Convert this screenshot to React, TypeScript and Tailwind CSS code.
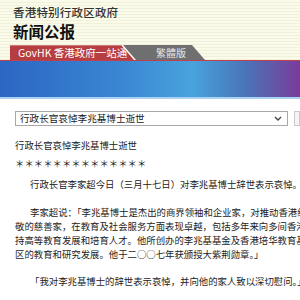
import React from "react";

const font = { fontFamily: '"Noto Sans CJK SC", "Noto Sans", sans-serif' };

export default function App() {
  return (
    <div className="w-[300px] h-[300px] overflow-hidden bg-white text-[#222]" style={font}>
      {/* header */}
      <div className="h-[60px] flex flex-col bg-[repeating-linear-gradient(180deg,#fbfbec_0px,#fbfbec_2px,#f1f1da_2px,#f1f1da_3px)]">
        <div className="pl-[13px] pt-[5px] text-[11.5px] leading-[14px] text-[#333] font-medium tracking-[0.2px] whitespace-nowrap">
          香港特别行政区政府
        </div>
        <div className="pl-[13px] mt-[3px] text-[15.5px] leading-[18px] font-bold text-[#111] whitespace-nowrap">
          新闻公报
        </div>
        <div className="mt-auto flex items-end pl-[10px] h-[15px]">
          <div className="relative z-10 h-[15px] w-[126px] bg-white [clip-path:polygon(0_0,113px_0,126px_100%,0_100%)]">
            <div className="h-[15px] w-[124px] bg-[#b63d40] border-t border-[#d27a7a] [clip-path:polygon(0_0,111px_0,124px_100%,0_100%)] flex items-center pl-[8px] text-[10.5px] leading-none text-white whitespace-nowrap">
              GovHK 香港政府一站通
            </div>
          </div>
          <div className="-ml-[16px] h-[15px] w-[85px] bg-[#6f6f6f] [clip-path:polygon(0_0,72px_0,85px_100%,0_100%)] flex items-center pl-[36px] text-[10px] leading-none text-[#e4e4e4] whitespace-nowrap">
            繁體版
          </div>
        </div>
      </div>
      <div className="h-px bg-[#c0404e]" />
      {/* gradient banner */}
      <div className="h-[36px] bg-[linear-gradient(90deg,#2c66c4_0%,#3a86d2_40%,#48a3dc_64%,#4a74b8_82%,#7a3c9a_100%)]" />
      <div className="h-[2px] bg-[#a9d2f2]" />

      {/* select row */}
      <div className="mt-[12px] flex items-center">
        <div className="ml-[15px] w-[275px] h-[15px] border border-[#a8a8a8] bg-white flex items-center justify-between pl-[4px] pr-[5px]">
          <span className="text-[9.6px] leading-none whitespace-nowrap text-[#222]">行政长官哀悼李兆基博士逝世</span>
          <svg width="8" height="5" viewBox="0 0 8 5" fill="none">
            <path d="M1 1 L4 4 L7 1" stroke="#444" strokeWidth="1.4" />
          </svg>
        </div>
        <div className="ml-[6px] w-[6px] h-[15px] border border-[#c8c8c8] bg-[#f4f4f4]" />
      </div>

      {/* body */}
      <div className="pl-[15px] mt-[13px] text-[9.4px] leading-[14px] text-[#222] whitespace-nowrap">
        <div className="leading-[13px]">行政长官哀悼李兆基博士逝世</div>
        <div className="mt-[4px] leading-[14px]">＊＊＊＊＊＊＊＊＊＊＊＊＊＊</div>
        <div className="mt-[7px] pl-[15px]">行政长官李家超今日（三月十七日）对李兆基博士辞世表示哀悼。</div>
        <div className="mt-[14px] pl-[15px]">李家超说：「李兆基博士是杰出的商界领袖和企业家，对推动香港经济发展贡献良多，亦是一位备受尊</div>
        <div>敬的慈善家，在教育及社会服务方面表现卓越，包括多年来向多间香港专上院校捐款，支</div>
        <div>持高等教育发展和培育人才。他所创办的李兆基基金及香港培华教育基金亦大力支持内地及香港地</div>
        <div>区的教育和研究发展。他于二○○七年获颁授大紫荆勋章。」</div>
        <div className="mt-[13px] pl-[15px]">「我对李兆基博士的辞世表示哀悼，并向他的家人致以深切慰问。」</div>
      </div>
    </div>
  );
}
